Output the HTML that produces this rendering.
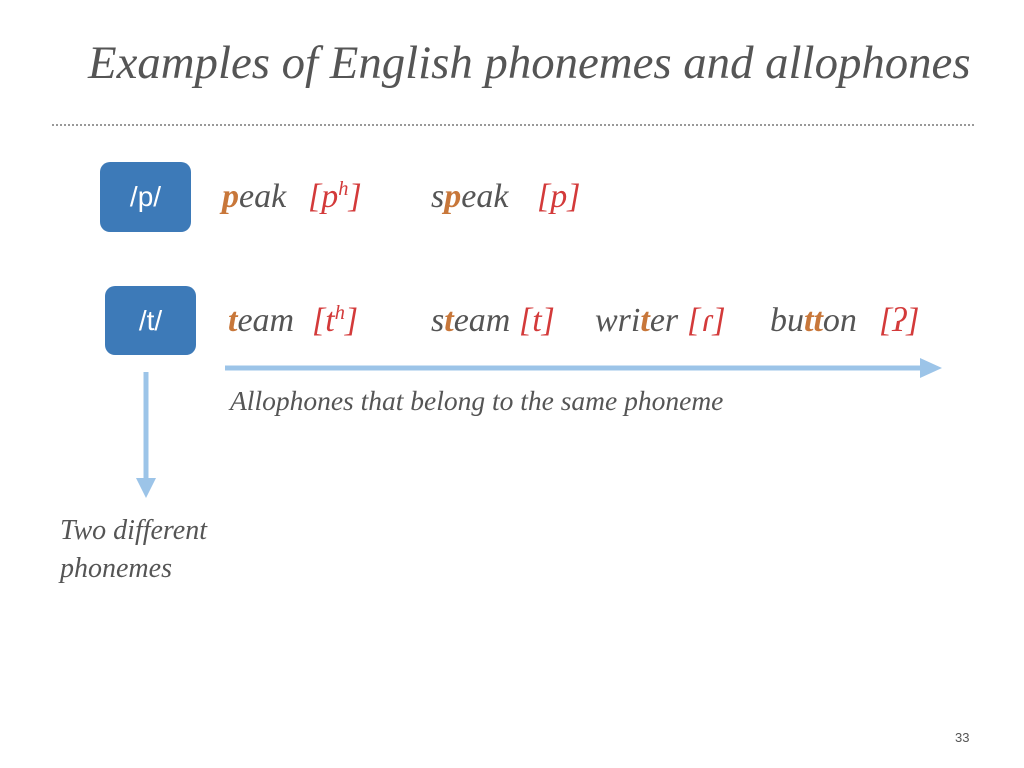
<!DOCTYPE html>
<html><head><meta charset="utf-8"><style>
body{margin:0;width:1024px;height:768px;background:#fff;position:relative;overflow:hidden;font-family:"Liberation Serif",serif;}
.a{position:absolute;white-space:nowrap;}
.t{font-style:italic;color:#555;}
.o{color:#c8773a;font-weight:bold;}
.r{color:#d33a3a;}
.box{position:absolute;background:#3d7ab8;border-radius:10px;color:#fff;font-family:"Liberation Sans",sans-serif;font-size:28px;display:flex;align-items:center;justify-content:center;}
sup{font-size:60%;vertical-align:0.6em;line-height:0}
</style></head><body>
<div class="a t" style="left:88px;top:36px;font-size:46.8px;">Examples of English phonemes and allophones</div>
<div class="a" style="left:52px;top:124px;width:922px;border-top:2px dotted #999;"></div>
<div class="box" style="left:100px;top:162px;width:91px;height:70px;">/p/</div>
<div class="box" style="left:105px;top:286px;width:91px;height:69px;">/t/</div>
<div class="a t" style="left:222px;top:178px;font-size:34px;"><span class="o">p</span>eak</div>
<div class="a t r" style="left:308px;top:178px;font-size:34px;">[p<sup>h</sup>]</div>
<div class="a t" style="left:431px;top:178px;font-size:34px;">s<span class="o">p</span>eak</div>
<div class="a t r" style="left:537px;top:178px;font-size:34px;">[p]</div>
<div class="a t" style="left:228px;top:302px;font-size:34px;"><span class="o">t</span>eam</div>
<div class="a t r" style="left:312px;top:302px;font-size:34px;">[t<sup>h</sup>]</div>
<div class="a t" style="left:431px;top:302px;font-size:34px;">s<span class="o">t</span>eam</div>
<div class="a t r" style="left:519px;top:302px;font-size:34px;">[t]</div>
<div class="a t" style="left:595px;top:302px;font-size:34px;">wri<span class="o">t</span>er</div>
<div class="a t r" style="left:687px;top:302px;font-size:34px;">[ɾ]</div>
<div class="a t" style="left:770px;top:302px;font-size:34px;">bu<span class="o">tt</span>on</div>
<div class="a t r" style="left:879px;top:302px;font-size:34px;">[ʔ]</div>
<svg class="a" style="left:0;top:0" width="1024" height="768">
<line x1="225" y1="368" x2="922" y2="368" stroke="#9cc4e8" stroke-width="5"/>
<polygon points="920,358 942,368 920,378" fill="#9cc4e8"/>
<line x1="146" y1="372" x2="146" y2="480" stroke="#9cc4e8" stroke-width="5"/>
<polygon points="136,478 156,478 146,498" fill="#9cc4e8"/>
</svg>
<div class="a t" style="left:230px;top:385px;font-size:27.5px;">Allophones that belong to the same phoneme</div>
<div class="a t" style="left:60px;top:512px;font-size:28px;line-height:38px;">Two different<br>phonemes</div>
<div class="a" style="left:955px;top:730px;font-size:13px;color:#555;font-family:'Liberation Sans',sans-serif;">33</div>
</body></html>
